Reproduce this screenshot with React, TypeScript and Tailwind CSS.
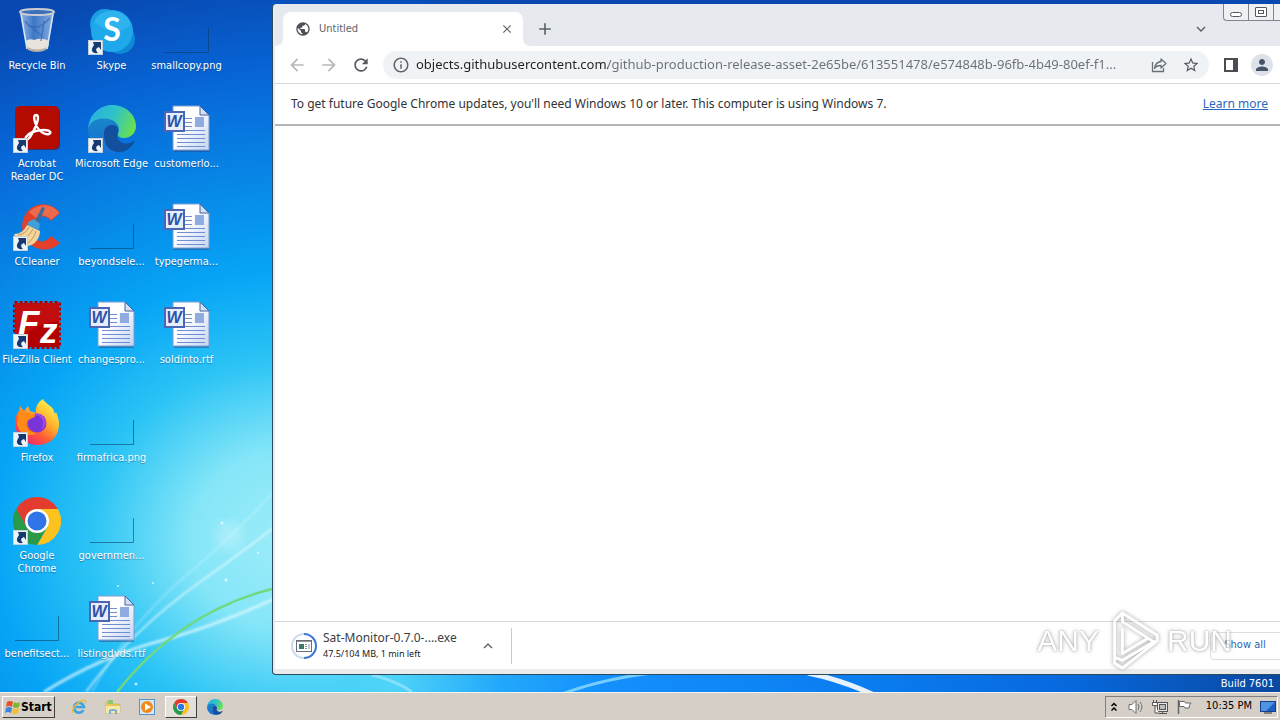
import React from 'react';
import {
  MdAdd,
  MdArrowBack,
  MdArrowForward,
  MdClose,
  MdInfoOutline,
  MdKeyboardArrowDown,
  MdKeyboardArrowUp,
  MdPerson,
  MdPublic,
  MdRefresh,
  MdStarBorder
} from 'react-icons/md';

interface IconProps {
  className?: string;
}

interface DesktopItem {
  label: string;
  icon: React.ComponentType<IconProps>;
  shortcut?: boolean;
}

function RecycleBinIcon({ className }: IconProps) {
  return (
    <svg viewBox="0 0 48 48" className={className}>
      <defs>
        <linearGradient id="bin" x1="0" x2="1" y1="0" y2="0">
          <stop offset="0" stopColor="#b9d3f0" />
          <stop offset=".4" stopColor="#4b82cc" />
          <stop offset="1" stopColor="#a9c6ea" />
        </linearGradient>
      </defs>
      <path d="M7 5h34l-6 36q-11 7-21 0z" fill="url(#bin)" opacity=".8" />
      <path d="M12 34q5-3 9-1 8-3 15 1l-1 7q-10 6-20 0z" fill="#e9e4dc" />
      <path d="M14 40q10 5 20 0l-1 3q-9 4-18 0z" fill="#b9b0a4" />
      <path d="M12 14q9 14 25-3M20 22l8 6M31 14l-3 20" stroke="#2c5fae" strokeWidth="1.5" fill="none" opacity=".6" />
      <path d="M8 7l6 35M40 7l-6 35" stroke="#d8e6f5" strokeWidth="1.5" />
      <ellipse cx="24" cy="5" rx="17" ry="3" fill="#3c70b8" stroke="#c9cdd2" strokeWidth="2" />
    </svg>
  );
}

function AcrobatIcon({ className }: IconProps) {
  return (
    <svg viewBox="0 0 48 48" className={className}>
      <rect x="3" y="2" width="44" height="43" rx="5" fill="#5d0a15" opacity=".6" />
      <rect x="2" y="1" width="44" height="43" rx="5" fill="#b30b00" />
      <path
        d="M23 10c-3 0-2 6 1 12 3 5 8 8 12 7 3-1 1-4-5-4-8 0-15 3-18 7-2 4 1 4 4 0 4-6 8-15 8-19 0-2-1-3-2-3z"
        fill="none"
        stroke="#fff"
        strokeWidth="2.4"
      />
    </svg>
  );
}

function CCleanerIcon({ className }: IconProps) {
  return (
    <svg viewBox="0 0 48 48" className={className}>
      <path d="M47 10l-9 8c-4-6-14-6-18 1-4 6-2 15 4 18 5 3 10 1 14-4l9 7C37 50 22 48 14 38 5 27 9 8 22 3c9-4 19-1 25 7z" fill="#e2402b" />
      <path d="M46 10l-8 7c-3-5-11-6-15-2l-7-6c9-9 23-9 30 1z" fill="#ee6a4c" />
      <path d="M29 4l3 1-7 17-4-2z" fill="#3a6d9c" />
      <path d="M15 19l6-3 6 5-1 6-11-4z" fill="#3f9fd6" />
      <path d="M14 22l13 6c0 7-5 14-12 15C8 43 3 37 1 31c6 0 10-3 13-9z" fill="#f3d49c" />
      <path d="M5 32q8-1 11-8M9 37q7-3 11-11M14 41q7-5 9-13" stroke="#c69a58" fill="none" />
    </svg>
  );
}

function FileZillaIcon({ className }: IconProps) {
  return (
    <svg viewBox="0 0 48 48" className={className}>
      <rect x="2" y="2" width="44" height="44" fill="#b30000" />
      <rect x="1.500" y="1.500" width="45" height="45" fill="none" stroke="#a80000" strokeWidth="3" strokeDasharray="3 2" />
      <path d="M2 2h44v18Q24 22 2 40z" fill="#cf1a1a" opacity=".5" />
      <text x="5" y="34" fontSize="35" fontWeight="bold" fontStyle="italic" fill="#fff" fontFamily="Liberation Sans, sans-serif">F</text>
      <text x="27" y="42" fontSize="35" fontWeight="bold" fontStyle="italic" fill="#fff" fontFamily="Liberation Sans, sans-serif">z</text>
    </svg>
  );
}

function FirefoxIcon({ className }: IconProps) {
  return (
    <svg viewBox="0 0 48 48" className={className}>
      <defs>
        <linearGradient id="fox" x1=".85" y1=".1" x2=".2" y2="1">
          <stop offset="0" stopColor="#fff04a" />
          <stop offset=".35" stopColor="#ffb22c" />
          <stop offset=".65" stopColor="#ff5a36" />
          <stop offset="1" stopColor="#e3207c" />
        </linearGradient>
      </defs>
      <path d="M30 0c2 4 7 6 10 10l2 5 1-2c3 7 4 12 2 19C42 41 33 47 23 46 11 45 2 36 2 24c0-5 1-8 4-12l1-5 4 5 4-5 2 5 6 2c-1-6 2-11 7-14z" fill="url(#fox)" />
      <circle cx="24" cy="24" r="9.5" fill="#7a35d8" />
      <path d="M17 16q9-4 14 2 5 8-3 13 5-9-2-14z" fill="#a347e6" />
      <path d="M6 13c6-1 9 2 15 2 2 1 1 4-2 4l-5 3c-2 7 3 12 10 12-10 6-20-1-20-11z" fill="#ff8a16" />
    </svg>
  );
}

function ChromeIcon({ className }: IconProps) {
  return (
    <svg viewBox="0 0 48 48" className={className}>
      <path d="M24 12h20.8A24 24 0 0 0 3.2 12l10.4 18L24 24z" fill="#e33b2e" />
      <path d="M24 12h20.8A24 24 0 0 1 24 48l10.4-18L24 24z" fill="#fcc31e" />
      <path d="M13.6 30L3.2 12A24 24 0 0 0 24 48l10.4-18L24 24z" fill="#2a9a48" />
      <circle cx="24" cy="24" r="12" fill="#fff" />
      <circle cx="24" cy="24" r="9.5" fill="#2f74e8" />
    </svg>
  );
}

function SkypeIcon({ className }: IconProps) {
  return (
    <svg viewBox="0 0 48 48" className={className}>
      <circle cx="17" cy="17" r="15" fill="#1c9fe0" />
      <circle cx="32" cy="32" r="15" fill="#0f8ad6" />
      <circle cx="24" cy="24" r="21" fill="#1fa9ea" />
      <path d="M6 15a20 20 0 0 1 37 3Q27 32 6 15z" fill="#37bdf2" opacity=".6" />
      <text x="24" y="34" textAnchor="middle" fontSize="32" fontWeight="bold" fill="#fff" fontFamily="Lato, sans-serif">S</text>
    </svg>
  );
}

function EdgeIcon({ className }: IconProps) {
  return (
    <svg viewBox="0 0 48 48" className={className}>
      <defs>
        <linearGradient id="edgeTop" x1="0" y1=".3" x2="1" y2=".6">
          <stop offset="0" stopColor="#28b0e0" />
          <stop offset=".5" stopColor="#2fc3c8" />
          <stop offset="1" stopColor="#6be04c" />
        </linearGradient>
        <linearGradient id="edgeLow" x1="0" y1="0" x2="0" y2="1">
          <stop offset="0" stopColor="#1a84c8" />
          <stop offset="1" stopColor="#1772d6" />
        </linearGradient>
      </defs>
      <path d="M0 24C1 9 12 0 24 0c14 0 24 10 24 21 0 8-6 12-12 12-4 0-7-2-6-4 2-3 1-12-8-14C12 13 2 18 0 24z" fill="url(#edgeTop)" />
      <path d="M0 24c2-9 12-12 20-10 7 1 11 6 11 11 0-3-4-6-8-5-7 2-9 10-5 17 4 7 12 10 15 9C18 52 0 42 0 24z" fill="url(#edgeLow)" />
      <path d="M16 30c-1-6 3-10 8-10 4 0 7 3 6 7-1 3-2 7 3 10s10 1 12-1c1-1 2 0 1 2-4 6-10 10-17 9-9-1-13-9-13-17z" fill="#12509e" />
    </svg>
  );
}

function WordDocIcon({ className }: IconProps) {
  return (
    <svg viewBox="0 0 48 48" className={className}>
      <defs>
        <linearGradient id="page" x1="0" y1="0" x2="1" y2="1">
          <stop offset=".4" stopColor="#fff" />
          <stop offset="1" stopColor="#c3d3f3" />
        </linearGradient>
      </defs>
      <path d="M11 2h26l9 9v36H11z" fill="#274a86" opacity=".5" />
      <path d="M10 1h27l9 9v35H10z" fill="url(#page)" stroke="#7f9cd0" />
      <path d="M37 1v9h9z" fill="#d4e0f7" stroke="#44659f" />
      <path d="M22 13.500h7M22 17.500h7M22 21.500h7M14 29.500h28M14 33.500h28M14 37.500h28M14 41.500h28" stroke="#6f8fd0" />
      <path d="M22 25.500h20" stroke="#6f8fd0" />
      <rect x="32" y="12" width="9" height="10" fill="#8fabe0" />
      <rect x="2" y="7" width="19" height="19" fill="#e6edfb" stroke="#4a66b4" strokeWidth="2" />
      <text x="11" y="22" textAnchor="middle" fontSize="16" fontWeight="bold" fontStyle="italic" fill="#2b52a8" fontFamily="Liberation Sans, sans-serif">W</text>
    </svg>
  );
}

// transparent thumbnail, only its drop shadow shows
function EmptyImageIcon({ className }: IconProps) {
  return (
    <svg viewBox="0 0 48 48" className={className}>
      <path d="M2 45.5h43.5V21" fill="none" stroke="#0a3a5c" strokeOpacity=".55" />
    </svg>
  );
}

function ShortcutArrow() {
  return (
    <svg viewBox="0 0 15 15" className="absolute bottom-0 left-0 h-[15px] w-[15px]">
      <rect x=".5" y=".5" width="14" height="14" fill="#eef3f8" stroke="#c5cfda" />
      <path d="M5 2h8v8l-2-3c-3 1-4 3-1 6-6 1-8-3-4-8z" fill="#16396f" />
    </svg>
  );
}

const desktopItems: DesktopItem[] = [
  { label: 'Recycle Bin', icon: RecycleBinIcon },
  { label: 'Acrobat Reader DC', icon: AcrobatIcon, shortcut: true },
  { label: 'CCleaner', icon: CCleanerIcon, shortcut: true },
  { label: 'FileZilla Client', icon: FileZillaIcon, shortcut: true },
  { label: 'Firefox', icon: FirefoxIcon, shortcut: true },
  { label: 'Google Chrome', icon: ChromeIcon, shortcut: true },
  { label: 'benefitsect...', icon: EmptyImageIcon },
  { label: 'Skype', icon: SkypeIcon, shortcut: true },
  { label: 'Microsoft Edge', icon: EdgeIcon, shortcut: true },
  { label: 'beyondsele...', icon: EmptyImageIcon },
  { label: 'changespro...', icon: WordDocIcon },
  { label: 'firmafrica.png', icon: EmptyImageIcon },
  { label: 'governmen...', icon: EmptyImageIcon },
  { label: 'listingdvds.rtf', icon: WordDocIcon },
  { label: 'smallcopy.png', icon: EmptyImageIcon },
  { label: 'customerlo...', icon: WordDocIcon },
  { label: 'typegerma...', icon: WordDocIcon },
  { label: 'soldinto.rtf', icon: WordDocIcon }
];

const wrappedLabels = ['Acrobat Reader DC', 'Google Chrome'];

function Wallpaper() {
  return (
    <svg viewBox="0 0 480 260" className="absolute bottom-0 left-0 h-[260px] w-[480px]" fill="none">
      <defs>
        <filter id="soft">
          <feGaussianBlur stdDeviation="1" />
        </filter>
        <filter id="wide">
          <feGaussianBlur stdDeviation="6" />
        </filter>
      </defs>
      <circle cx="229" cy="104" r="15" fill="#fff" opacity=".22" filter="url(#wide)" />
      <g filter="url(#soft)" stroke="#e6fbff">
        <path d="M44 260Q100 225 160 209T300 155" strokeWidth="3" opacity=".7" />
        <path d="M86 260Q130 200 200 150T300 75" strokeWidth="2" opacity=".7" />
        <path d="M92 260Q130 190 190 140T300 30" strokeWidth="1.5" opacity=".4" />
      </g>
      <path d="M117 260Q180 180 272 157" stroke="#6fd880" strokeWidth="2.5" />
      <g fill="#fff" opacity=".7">
        <circle cx="222" cy="91" r="1.5" />
        <circle cx="258" cy="121" r="1" />
        <circle cx="226" cy="148" r="1.5" />
        <circle cx="118" cy="154" r="1" />
        <circle cx="153" cy="151" r="1" />
        <circle cx="136" cy="252" r="1.5" />
      </g>
    </svg>
  );
}

function BrowserTabs() {
  return (
    <div className="relative flex h-[42px] items-end rounded-tl bg-[#e6e9ed] pl-2">
      <div className="relative flex h-[34px] w-60 items-center rounded-t-lg bg-white pl-3 pr-2">
        <svg viewBox="0 0 8 8" className="absolute -left-2 bottom-0 h-2 w-2">
          <path d="M8 0v8H0q8 0 8-8z" fill="#fff" />
        </svg>
        <svg viewBox="0 0 8 8" className="absolute -right-2 bottom-0 h-2 w-2">
          <path d="M0 0v8h8Q0 8 0 0z" fill="#fff" />
        </svg>
        <MdPublic className="h-4 w-4 text-[#4d5156]" />
        <span className="ml-2 flex-1 font-['DejaVu_Sans_Condensed','Noto_Sans',sans-serif] text-[11px] text-[#5f6368]">Untitled</span>
        <button aria-label="Close tab" className="text-[#5f6368]">
          <MdClose className="h-[14px] w-4" />
        </button>
      </div>
      <button aria-label="New tab" className="mb-[7px] ml-3 text-[#5f6368]">
        <MdAdd className="h-5 w-5" />
      </button>
      <button aria-label="Search tabs" className="mb-2 ml-auto mr-[70px] text-[#5f6368]">
        <MdKeyboardArrowDown className="h-[18px] w-[18px]" />
      </button>
      <div className="absolute right-0 top-0 flex h-[17px] rounded-bl border-b border-l border-[#80858b] bg-[#eef0f2]">
        <button aria-label="Minimize" className="flex w-[25px] items-end justify-center border-r border-[#80858b] pb-[3px]">
          <span className="h-[5px] w-3 rounded-sm border border-[#55595e] bg-white" />
        </button>
        <button aria-label="Maximize" className="flex w-[25px] items-center justify-center border-r border-[#80858b]">
          <span className="flex h-[10px] w-3 items-center justify-center rounded-[1px] border border-[#55595e] bg-white">
            <span className="h-1 w-[6px] border border-[#55595e]" />
          </span>
        </button>
        <span className="w-[6px]" />
      </div>
    </div>
  );
}

function BrowserToolbar() {
  return (
    <div className="flex h-[38px] items-center border-b border-[#d5d7da] bg-white pl-3 pr-[7px]">
      <button aria-label="Back" className="text-[#b6b9bc]"><MdArrowBack className="h-5 w-5" /></button>
      <button aria-label="Forward" className="ml-3 text-[#b6b9bc]"><MdArrowForward className="h-5 w-5" /></button>
      <button aria-label="Reload" className="ml-3 text-[#55595e]"><MdRefresh className="h-5 w-5" /></button>
      <div className="ml-3 flex h-7 min-w-0 flex-1 items-center rounded-full bg-[#f0f3f6] px-[9px]">
        <MdInfoOutline className="h-[18px] w-[18px] shrink-0 text-[#5f6368]" />
        <input
          aria-label="Address"
          readOnly
          value="objects.githubusercontent.com/github-production-release-asset-2e65be/613551478/e574848b-96fb-4b49-80ef-f1..."
          className="ml-[6px] min-w-0 flex-1 bg-[linear-gradient(to_right,#202124_192px,#6a6f75_192px)] bg-clip-text text-[13px] text-transparent outline-none"
        />
        <button aria-label="Share" className="ml-3 text-[#6a6f75]">
          <svg viewBox="0 0 18 18" className="h-[18px] w-[18px]" fill="none" stroke="currentColor" strokeWidth="1.3">
            <path d="M2.500 6v9.500h11V12" />
            <path d="M11 3l5 4.500-5 4.500V9.500c-3 0-5 .5-6.500 3C5 8.500 7.500 6 11 5.500z" strokeLinejoin="round" />
          </svg>
        </button>
        <button aria-label="Bookmark" className="ml-[14px] text-[#55595e]"><MdStarBorder className="h-[18px] w-[18px]" /></button>
      </div>
      <button aria-label="Side panel" className="ml-[15px]">
        <svg viewBox="0 0 14 14" className="h-[14px] w-[14px]">
          <path d="M0 0h14v14H0zM2 2v10h7V2z" fill="#4a4d52" fillRule="evenodd" />
        </svg>
      </button>
      <button aria-label="Profile" className="ml-[13px] flex h-[22px] w-[22px] items-center justify-center rounded-full bg-[#dde2ea] text-[#47536b]">
        <MdPerson className="h-[18px] w-[18px]" />
      </button>
    </div>
  );
}

function DownloadShelf() {
  return (
    <div className="relative flex h-[48px] items-center border-t border-[#d5d7da] bg-white">
      <button className="flex h-9 w-[237px] items-center border-r border-[#c8cace] pl-[15px] pr-[14px] text-left">
        <svg viewBox="0 0 28 28" className="h-7 w-7 shrink-0" fill="none">
          <circle cx="14" cy="14" r="12" stroke="#ccd9ee" strokeWidth="2" />
          <path d="M14 2a12 12 0 0 1 0 24" stroke="#3f78d6" strokeWidth="2" />
          <rect x="6.500" y="8.500" width="15" height="11" fill="#fff" stroke="#6b7077" />
          <path d="M7 9.500h14" stroke="#8d949c" />
          <rect x="9" y="12" width="5" height="5" fill="#3f7a68" />
          <path d="M15 12.500h2M15 14.500h2M15 16.500h2M19 12v5" stroke="#8d949c" />
        </svg>
        <span className="ml-[5px] flex-1 whitespace-nowrap">
          <span className="block text-[12px] leading-4 text-[#3c4043]">Sat-Monitor-0.7.0-....exe</span>
          <span className="block text-[9px] leading-4 text-[#202124]">47.5/104 MB, 1 min left</span>
        </span>
        <MdKeyboardArrowUp className="h-[18px] w-[18px] text-[#5f6368]" />
      </button>
      <button className="-mr-1 ml-auto h-7 w-[74px] rounded border border-[#dcdfe3] pr-1 font-['DejaVu_Sans_Condensed','Noto_Sans',sans-serif] text-[11px] text-[#2b65b8]">
        Show all
      </button>
      <Watermark />
    </div>
  );
}

function Watermark() {
  return (
    <div className="pointer-events-none absolute -top-3 right-[48px] flex h-[60px] items-center font-['Liberation_Sans',sans-serif] text-[30px] text-white opacity-80 [text-shadow:0_0_2px_#8a8a8a,0_0_4px_#aaaaaa]">
      <span>ANY</span>
      <svg viewBox="0 0 60 64" className="mx-[5px] h-[62px] w-[58px] drop-shadow-[0_0_2px_#888]" fill="none" stroke="#fff" strokeLinejoin="round">
        <path d="M11 50V12l8-8 36 23v6L19 61l-8-5z" strokeWidth="3" />
        <path d="M19 4v9l34 22M19 20v26l27-16M11 50l8 3 34-20" strokeWidth="3" />
      </svg>
      <span>RUN</span>
    </div>
  );
}

function BrowserWindow() {
  return (
    <section className="flex min-h-0 flex-1 flex-col rounded-l border-b border-l border-[#2b4a5c] bg-[#e9ebed] pb-[5px] pl-[2px]">
      <BrowserTabs />
      <BrowserToolbar />
      <div className="flex h-[42px] items-center justify-between border-b-2 border-[#b4b6b8] bg-white pl-4 pr-3 text-[12px] text-[#303236]">
        <p>To get future Google Chrome updates, you'll need Windows 10 or later. This computer is using Windows 7.</p>
        <a href="#learn" className="text-[#2a67c0] underline">Learn more</a>
      </div>
      <main className="flex-1 bg-white" />
      <DownloadShelf />
    </section>
  );
}

function WindowsLogo({ className }: IconProps) {
  return (
    <svg viewBox="0 0 16 16" className={className}>
      <path d="M2 3q3-2 6 0L7 8Q4 6 1 8z" fill="#e8502a" />
      <path d="M9 3q3 2 6 0l-1 5q-3 2-6 0z" fill="#7cb82f" />
      <path d="M1 9q3-2 6 0l-1 5q-3-2-6 0z" fill="#3a86dc" />
      <path d="M8 9q3 2 6 0l-1 5q-3 2-6 0z" fill="#f7bd2a" />
    </svg>
  );
}

function ExplorerIcon({ className }: IconProps) {
  return (
    <svg viewBox="0 0 16 16" className={className}>
      <path d="M1 3h5l1 2h8v9H1z" fill="#e7c964" stroke="#c9a545" strokeWidth=".5" />
      <path d="M3 1h5v4H3z" fill="#8fc56f" />
      <path d="M1 7h14v7H1z" fill="#f7e7a2" />
      <path d="M4 15v-4q4-2 8 0v4h-2v-3H6v3z" fill="#6fb0dc" />
    </svg>
  );
}

function IeIcon({ className }: IconProps) {
  return (
    <svg viewBox="0 0 16 16" className={className} fill="none">
      <path d="M12.500 11A5 5 0 1 1 13 8H4" stroke="#3da5e0" strokeWidth="2.600" />
      <path d="M2 14C-1 12 6 3 12 1.500q4-1 2 3" stroke="#e9bd3c" strokeWidth="1.500" />
    </svg>
  );
}

function MediaPlayerIcon({ className }: IconProps) {
  return (
    <svg viewBox="0 0 16 16" className={className}>
      <rect x=".5" y=".5" width="15" height="15" fill="#d3e7f7" stroke="#5d93c4" />
      <circle cx="8" cy="8" r="6" fill="#f28a1c" />
      <path d="M6 4.500v7L12 8z" fill="#fff" />
    </svg>
  );
}

const taskbarApps = [
  { id: 'ie', label: 'Internet Explorer', icon: IeIcon },
  { id: 'explorer', label: 'File Explorer', icon: ExplorerIcon },
  { id: 'wmp', label: 'Media Player', icon: MediaPlayerIcon },
  { id: 'chrome', label: 'Google Chrome', icon: ChromeIcon, active: true },
  { id: 'edge', label: 'Microsoft Edge', icon: EdgeIcon }
];

function Taskbar() {
  return (
    <footer className="relative flex h-7 items-center border-t border-[#f6f4f0] bg-[#d5cfc7] px-[2px] font-['DejaVu_Sans_Condensed','Noto_Sans',sans-serif]">
      <button className="flex h-[22px] items-center border border-b-[#404040] border-l-white border-r-[#404040] border-t-white px-[2px] text-[12px] font-bold text-black">
        <WindowsLogo className="h-4 w-4" />
        <span>Start</span>
      </button>
      <div className="ml-2 flex items-center gap-[2px]">
        {taskbarApps.map((app) => {
          const Icon = app.icon;
          return (
            <button
              key={app.id}
              aria-label={app.label}
              className={
                app.active
                  ? 'flex h-[22px] w-8 items-center justify-center border border-b-[#404040] border-l-white border-r-[#404040] border-t-white bg-[#e3dfd9]'
                  : 'flex h-[22px] w-8 items-center justify-center'
              }
            >
              <Icon className="h-4 w-4" />
            </button>
          );
        })}
      </div>
      <div className="ml-auto flex h-[22px] items-center border border-b-white border-l-[#808080] border-r-white border-t-[#808080] pl-1 text-[11px] text-black">
        <svg viewBox="0 0 8 10" className="h-[10px] w-2" fill="none" stroke="#000" strokeWidth="1.500">
          <path d="M1.500 4L4 1.500 6.500 4M1.500 8.500L4 6l2.500 2.500" />
        </svg>
        <svg viewBox="0 0 16 16" className="ml-[10px] h-4 w-4" fill="none" stroke="#6f6f6f">
          <path d="M1 5.500h3l4-4v13l-4-4H1z" fill="#fff" />
          <path d="M10 5q2 3 0 6M12 3q4 5 0 10" />
        </svg>
        <svg viewBox="0 0 16 16" className="ml-2 h-4 w-4" fill="none" stroke="#555">
          <rect x="5.500" y="3.500" width="10" height="9" fill="#e6e6e6" />
          <rect x="7.500" y="5.500" width="6" height="5" fill="#bdbdbd" />
          <path d="M7 14.500h8M10.500 13v2" />
          <path d="M1.500 1v3M4.500 1v3M.5 3.500h5v3h-5zM3 7v7h4" fill="#fff" />
        </svg>
        <svg viewBox="0 0 16 16" className="ml-2 h-4 w-4" fill="none" stroke="#666">
          <path d="M2.500 1v14" strokeWidth="1.500" />
          <path d="M3.500 2.500h5l1 1.500h5.500q-2 2-2 5H9l-1-1.500H3.500z" fill="#fff" />
        </svg>
        <time className="ml-[14px]">10:35 PM</time>
        <svg viewBox="0 0 16 14" className="ml-2 mr-px h-[14px] w-4">
          <rect x=".5" y="1.500" width="15" height="10" fill="#1d5fc4" stroke="#17408a" />
          <path d="M1 2h14L6 11H1z" fill="#4d94e4" />
          <path d="M4 13h8" stroke="#333" />
        </svg>
      </div>
    </footer>
  );
}

export default function App() {
  return (
    <div className="flex min-h-screen flex-col bg-[#0a84ec] font-['Noto_Sans',sans-serif]">
      <div className="relative flex flex-1 bg-[radial-gradient(ellipse_660px_600px_at_290px_540px,#9cecf9_0,#85e6f8_15%,#2cc4f5_30%,#06a4f6_45%,#0784e5_62%,#0765d6_78%,#0848b0_95%)]">
        <Wallpaper />
        <div className="relative grid w-[272px] shrink-0 grid-flow-col grid-cols-[74px_75px_75px] grid-rows-[repeat(6,98px)_90px] pt-[7px] font-['DejaVu_Sans_Condensed','Noto_Sans',sans-serif]">
          {desktopItems.map((item) => {
            const Icon = item.icon;
            return (
              <button key={item.label} className="flex flex-col items-center text-[11px] leading-[13px] text-white">
                <span className="relative mb-1 h-12 w-12 shrink-0">
                  <Icon className="h-12 w-12" />
                  {item.shortcut && <ShortcutArrow />}
                </span>
                <span
                  className={
                    wrappedLabels.includes(item.label)
                      ? 'w-16 [text-shadow:0_1px_1px_#0a3a6a80]'
                      : 'whitespace-nowrap [text-shadow:0_1px_1px_#0a3a6a80]'
                  }
                >
                  {item.label}
                </span>
              </button>
            );
          })}
        </div>
        <div className="relative flex min-w-0 flex-1 flex-col pt-1">
          <BrowserWindow />
          <div className="relative overflow-hidden bg-[linear-gradient(to_right,transparent_0,#4fd4f8_120px,#22a8fb_230px,#1490fc_330px,#0a7cf0_600px,#0768dc_800px,#0a48a0_100%)]">
            <svg viewBox="0 0 640 17" className="absolute left-0 top-0 h-[17px] w-[640px]" fill="none">
              <path d="M100 0q25 6 40 17" stroke="#baf0ff" strokeWidth="3" opacity=".5" />
              <path d="M290 19Q330 4 380 -2" stroke="#8fdcff" strokeWidth="3" opacity=".8" />
              <path d="M536-2Q570 5 602 20" stroke="#fff" strokeWidth="5" opacity=".9" />
            </svg>
            <p className="relative pr-[6px] text-right font-['DejaVu_Sans_Condensed','Noto_Sans',sans-serif] text-[11px] leading-[17px] text-white">
              Build 7601
            </p>
          </div>
        </div>
      </div>
      <Taskbar />
    </div>
  );
}
